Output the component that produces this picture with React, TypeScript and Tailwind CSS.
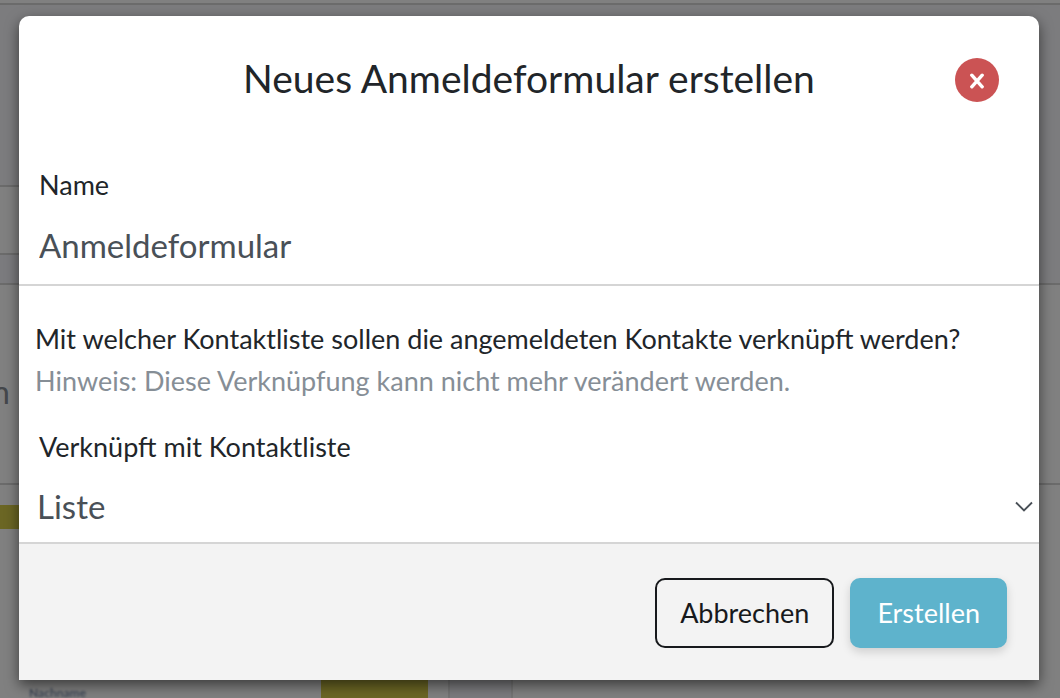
import { useState } from "react";

function Backdrop() {
  return (
    <div aria-hidden="true" className="flex h-full flex-col bg-[#808080]">
      <div className="h-[3px]" />
      <div className="flex min-h-0 flex-1 border-t-2 border-[#6b6b6b]">
        <div className="flex flex-1 flex-col">
          <div className="h-[180px] bg-[#7c7c7e]" />
          <div className="h-[70px] border-y-2 border-[#6b6b6b]" />
          <div className="h-7 bg-[#7b7b7e]" />
          <div className="flex h-[202px] flex-col justify-center border-y-2 border-[#6b6b6b] pt-4 text-[32px] leading-8 text-[#44474b]">
            <span className="-ml-2">n</span>
          </div>
          <div className="mt-5 h-6 bg-[#6b6624]" />
        </div>
        <div className="w-1/2">
          <div className="h-[278px] bg-[#7c7c7e]" />
          <div className="h-[202px] border-y-2 border-[#6b6b6b]" />
        </div>
      </div>
      <div className="flex h-[18px]">
        <span className="w-[321px] pt-[6px] pl-[29px] text-[12px] leading-[14px] font-bold text-[#3f4857] blur-[1px]">
          Nachname
        </span>
        <span className="w-[107px] bg-[#6b6624]" />
        <span className="ml-5 w-[65px] border-x-2 border-[#747474] bg-[#7b7b7e]" />
      </div>
    </div>
  );
}

export default function App() {
  const [name, setName] = useState("Anmeldeformular");
  return (
    <div className="relative h-screen overflow-hidden font-['Lato','Noto_Sans',sans-serif] text-[#212529]">
      <Backdrop />
      <div className="absolute inset-0 pt-4 pr-[21px] pl-[19px]">
        <form
          role="dialog"
          aria-labelledby="dialog-title"
          onSubmit={(e) => e.preventDefault()}
          className="rounded-t-[10px] bg-white shadow-[0_5px_14px_rgba(0,0,0,0.55)]"
        >
          <header className="grid grid-cols-[44px_1fr_44px] items-center px-10 py-[38px]">
            <h1 id="dialog-title" className="col-start-2 pb-1 text-center text-[39px] leading-[48px]">
              Neues Anmeldeformular erstellen
            </h1>
            <button
              type="button"
              aria-label="Schließen"
              className="flex size-11 items-center justify-center rounded-full bg-[#cb5354]"
            >
              <svg
                viewBox="0 0 16 16"
                className="mt-[2px] size-4"
                fill="none"
                stroke="white"
                strokeWidth="3.4"
                strokeLinecap="round"
              >
                <path d="M2.8 2.2 13.2 13.8M13.2 2.2 2.8 13.8" />
              </svg>
            </button>
          </header>

          <div className="flex flex-col pt-5">
            <label htmlFor="form-name" className="px-5 text-[27px] leading-[42px]">
              Name
            </label>
            <input
              id="form-name"
              value={name}
              onChange={(e) => setName(e.target.value)}
              className="h-20 w-full border-b-2 border-[#d5d5d5] px-5 text-[33px] text-[#495057] outline-none"
            />
          </div>

          <div className="px-4 pt-8 pb-[2px] text-[27px] leading-[42px] whitespace-nowrap">
            <p>Mit welcher Kontaktliste sollen die angemeldeten Kontakte verknüpft werden?</p>
            <p className="text-[#868e96]">Hinweis: Diese Verknüpfung kann nicht mehr verändert werden.</p>
          </div>

          <div className="flex flex-col pt-[22px]">
            <label htmlFor="contact-list" className="px-5 text-[27px] leading-[42px]">
              Verknüpft mit Kontaktliste
            </label>
            <div className="grid items-center border-b-2 border-[#d5d5d5]">
              <select
                id="contact-list"
                className="col-start-1 row-start-1 h-[74px] w-full appearance-none px-[18px] pt-1 text-[33px] text-[#495057] outline-none"
              >
                <option>Liste</option>
              </select>
              <svg
                viewBox="0 0 18 12"
                className="pointer-events-none col-start-1 row-start-1 mt-1 mr-[6px] h-3 w-[18px] justify-self-end"
                fill="none"
                stroke="#495057"
                strokeWidth="1.8"
              >
                <path d="M1 1.5 9 9.5 17 1.5" />
              </svg>
            </div>
          </div>

          <footer className="flex justify-end gap-4 bg-[#f3f3f3] pt-[34px] pr-8 pb-8 text-[27px] leading-8">
            <button
              type="button"
              className="h-[70px] rounded-[10px] border-2 border-[#17191c] px-[23px] text-[#17191c]"
            >
              Abbrechen
            </button>
            <button
              type="submit"
              className="h-[70px] rounded-[10px] bg-[#5eb3cc] px-[27px] text-white shadow-[0_4px_10px_rgba(0,0,0,0.15)]"
            >
              Erstellen
            </button>
          </footer>
        </form>
      </div>
    </div>
  );
}
